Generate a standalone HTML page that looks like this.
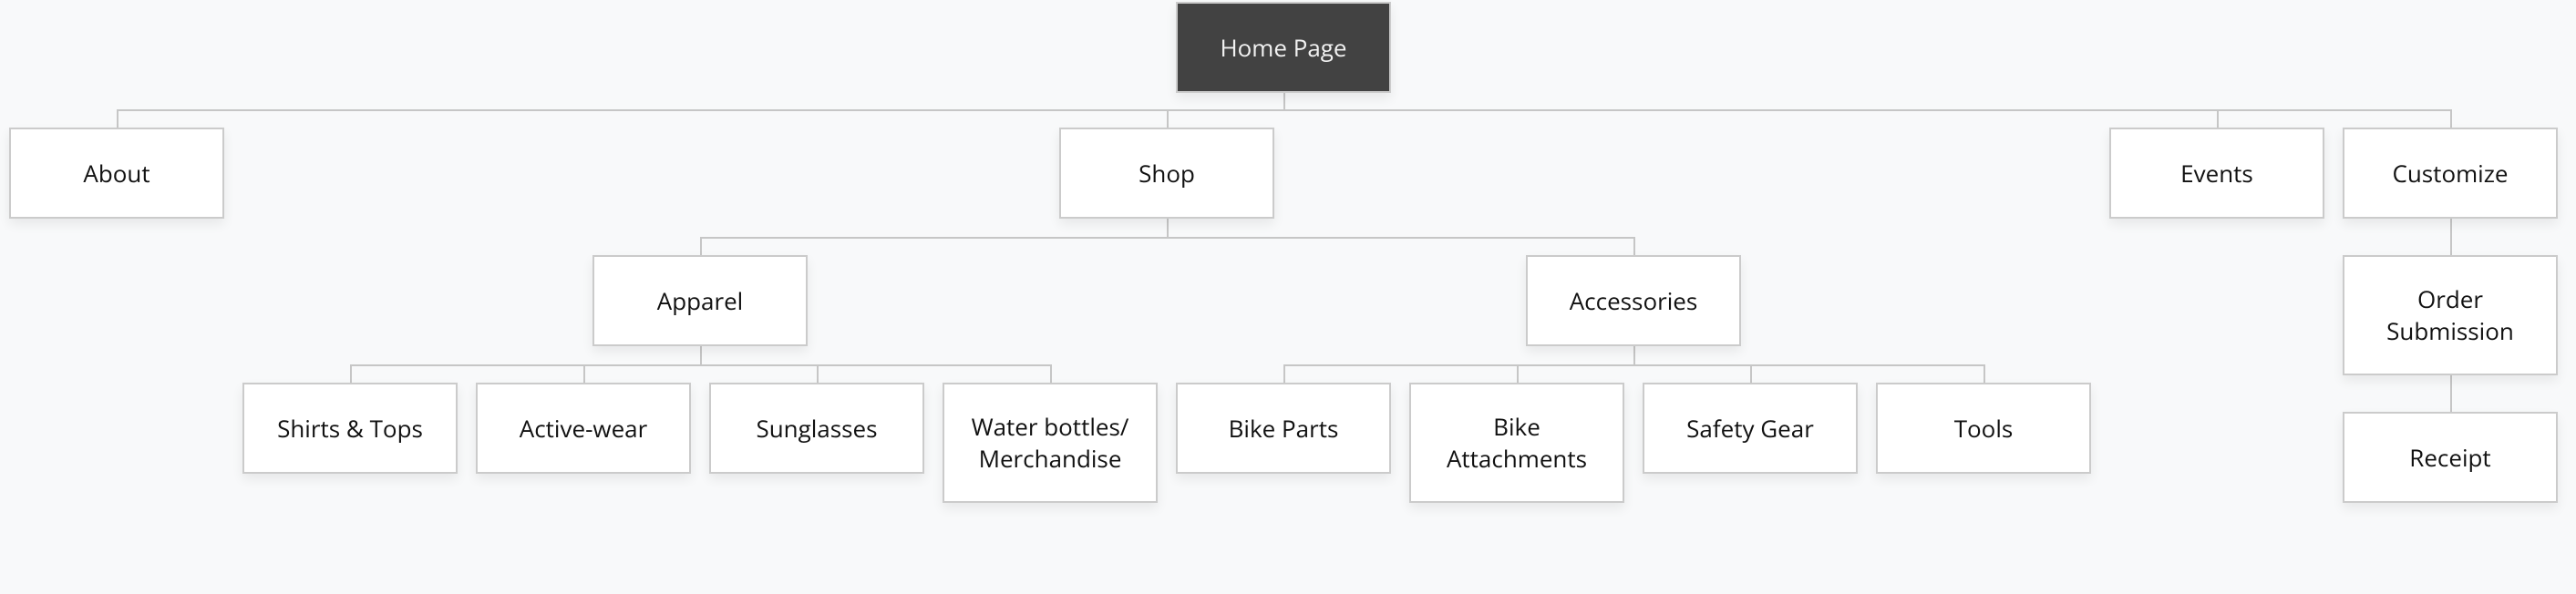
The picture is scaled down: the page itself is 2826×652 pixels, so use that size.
<!DOCTYPE html>
<html><head><meta charset="utf-8"><style>
html,body{margin:0;padding:0}
body{width:2826px;height:652px;background:#f8f9fa;position:relative;overflow:hidden;font-family:"Open Sans","Liberation Sans",sans-serif}
.b{position:absolute;width:232px;height:96px;background:#fff;border:2px solid #cbcbcb;box-shadow:0 6px 12px rgba(0,0,0,0.07);display:flex;align-items:center;justify-content:center;text-align:center;font-size:26px;line-height:35px;color:#111}
.t{height:128px}
.d{background:#424242;color:#f2f2f2}
.h{position:absolute;height:2px;background:#c6c6c6}
.v{position:absolute;width:2px;background:#c6c6c6}
</style></head><body>
<!-- lines -->
<div class="v" style="left:1408px;top:100px;height:21px"></div>
<div class="h" style="left:128px;top:120px;width:2562px"></div>
<div class="v" style="left:128px;top:120px;height:20px"></div>
<div class="v" style="left:1280px;top:120px;height:20px"></div>
<div class="v" style="left:2432px;top:120px;height:20px"></div>
<div class="v" style="left:2688px;top:120px;height:20px"></div>

<div class="v" style="left:1280px;top:240px;height:21px"></div>
<div class="h" style="left:768px;top:260px;width:1026px"></div>
<div class="v" style="left:768px;top:260px;height:20px"></div>
<div class="v" style="left:1792px;top:260px;height:20px"></div>

<div class="v" style="left:768px;top:380px;height:21px"></div>
<div class="h" style="left:384px;top:400px;width:770px"></div>
<div class="v" style="left:384px;top:400px;height:20px"></div>
<div class="v" style="left:640px;top:400px;height:20px"></div>
<div class="v" style="left:896px;top:400px;height:20px"></div>
<div class="v" style="left:1152px;top:400px;height:20px"></div>

<div class="v" style="left:1792px;top:380px;height:21px"></div>
<div class="h" style="left:1408px;top:400px;width:770px"></div>
<div class="v" style="left:1408px;top:400px;height:20px"></div>
<div class="v" style="left:1664px;top:400px;height:20px"></div>
<div class="v" style="left:1920px;top:400px;height:20px"></div>
<div class="v" style="left:2176px;top:400px;height:20px"></div>

<div class="v" style="left:2688px;top:240px;height:40px"></div>
<div class="v" style="left:2688px;top:412px;height:40px"></div>

<!-- boxes -->
<div class="b d" style="left:1290px;top:2px">Home Page</div>
<div class="b" style="left:10px;top:140px">About</div>
<div class="b" style="left:1162px;top:140px">Shop</div>
<div class="b" style="left:2314px;top:140px">Events</div>
<div class="b" style="left:2570px;top:140px">Customize</div>
<div class="b" style="left:650px;top:280px">Apparel</div>
<div class="b" style="left:1674px;top:280px">Accessories</div>
<div class="b t" style="left:2570px;top:280px">Order<br>Submission</div>
<div class="b" style="left:2570px;top:452px">Receipt</div>
<div class="b" style="left:266px;top:420px">Shirts &amp; Tops</div>
<div class="b" style="left:522px;top:420px">Active-wear</div>
<div class="b" style="left:778px;top:420px">Sunglasses</div>
<div class="b t" style="left:1034px;top:420px">Water bottles/<br>Merchandise</div>
<div class="b" style="left:1290px;top:420px">Bike Parts</div>
<div class="b t" style="left:1546px;top:420px">Bike<br>Attachments</div>
<div class="b" style="left:1802px;top:420px">Safety Gear</div>
<div class="b" style="left:2058px;top:420px">Tools</div>
</body></html>
